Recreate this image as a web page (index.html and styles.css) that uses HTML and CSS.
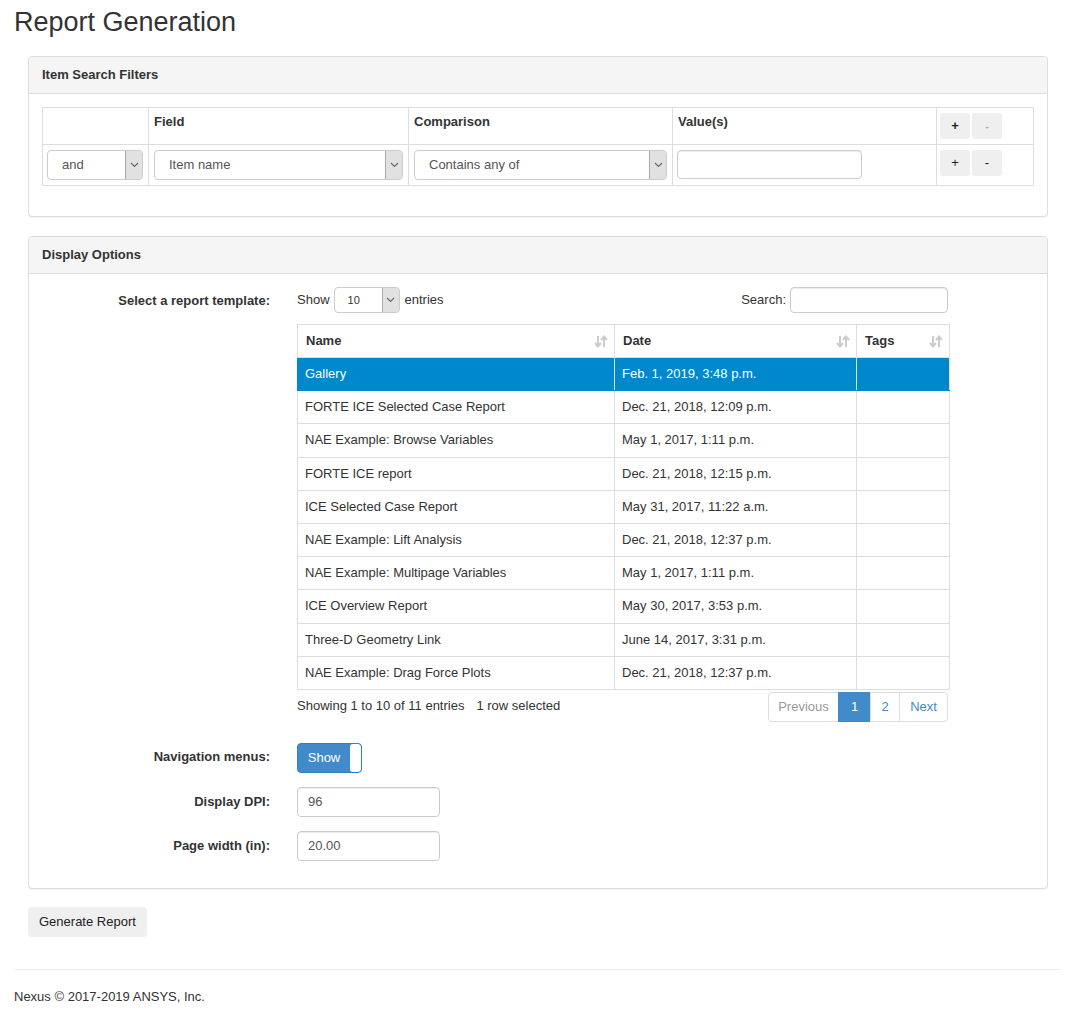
FILE: index.html
```html
<!DOCTYPE html>
<html>
<head>
<meta charset="utf-8">
<link rel="stylesheet" href="styles.css">
</head>
<body>
<div class="page">
  <h1 class="title">Report Generation</h1>

  <div class="panel">
    <div class="panel-heading">Item Search Filters</div>
    <div class="panel-body filters-body">
      <table class="filters">
        <colgroup>
          <col class="c1"><col class="c2"><col class="c3"><col class="c4"><col class="c5">
        </colgroup>
        <tr class="fhead">
          <th></th>
          <th>Field</th>
          <th>Comparison</th>
          <th>Value(s)</th>
          <th class="btncell"><div class="pm"><span class="btn-s">+</span><span class="btn-s dis">-</span></div></th>
        </tr>
        <tr class="frow">
          <td><div class="sel"><span class="sel-txt">and</span><span class="sel-arrow"><svg width="9" height="6" viewBox="0 0 9 6"><path d="M1 1 L4.5 4.5 L8 1" fill="none" stroke="#666" stroke-width="1.1"/></svg></span></div></td>
          <td><div class="sel"><span class="sel-txt">Item name</span><span class="sel-arrow"><svg width="9" height="6" viewBox="0 0 9 6"><path d="M1 1 L4.5 4.5 L8 1" fill="none" stroke="#666" stroke-width="1.1"/></svg></span></div></td>
          <td><div class="sel"><span class="sel-txt">Contains any of</span><span class="sel-arrow"><svg width="9" height="6" viewBox="0 0 9 6"><path d="M1 1 L4.5 4.5 L8 1" fill="none" stroke="#666" stroke-width="1.1"/></svg></span></div></td>
          <td><div class="input val"></div></td>
          <td class="btncell"><div class="pm"><span class="btn-s">+</span><span class="btn-s">-</span></div></td>
        </tr>
      </table>
    </div>
  </div>

  <div class="panel">
    <div class="panel-heading">Display Options</div>
    <div class="panel-body options-body">
      <div class="form-row row-template">
        <div class="label">Select a report template:</div>
        <div class="control">
          <div class="dt-top">
            <div class="dt-len">Show <div class="sel small"><span class="sel-txt">10</span><span class="sel-arrow"><svg width="9" height="6" viewBox="0 0 9 6"><path d="M1 1 L4.5 4.5 L8 1" fill="none" stroke="#666" stroke-width="1.1"/></svg></span></div> entries</div>
            <div class="dt-search">Search: <div class="input search"></div></div>
          </div>
          <table class="dt">
            <colgroup><col class="d1"><col class="d2"><col class="d3"></colgroup>
            <thead>
              <tr>
                <th><span>Name</span><svg class="sort" width="14" height="13" viewBox="0 0 14 13"><path d="M4 1 V11 M1 8 L4 11.5 L7 8" fill="none" stroke="#ccc" stroke-width="2"/><path d="M10 12 V2 M7 5 L10 1.5 L13 5" fill="none" stroke="#ccc" stroke-width="2"/></svg></th>
                <th><span>Date</span><svg class="sort" width="14" height="13" viewBox="0 0 14 13"><path d="M4 1 V11 M1 8 L4 11.5 L7 8" fill="none" stroke="#ccc" stroke-width="2"/><path d="M10 12 V2 M7 5 L10 1.5 L13 5" fill="none" stroke="#ccc" stroke-width="2"/></svg></th>
                <th><span>Tags</span><svg class="sort" width="14" height="13" viewBox="0 0 14 13"><path d="M4 1 V11 M1 8 L4 11.5 L7 8" fill="none" stroke="#ccc" stroke-width="2"/><path d="M10 12 V2 M7 5 L10 1.5 L13 5" fill="none" stroke="#ccc" stroke-width="2"/></svg></th>
              </tr>
            </thead>
            <tbody>
              <tr class="selected"><td>Gallery</td><td>Feb. 1, 2019, 3:48 p.m.</td><td></td></tr>
              <tr><td>FORTE ICE Selected Case Report</td><td>Dec. 21, 2018, 12:09 p.m.</td><td></td></tr>
              <tr><td>NAE Example: Browse Variables</td><td>May 1, 2017, 1:11 p.m.</td><td></td></tr>
              <tr><td>FORTE ICE report</td><td>Dec. 21, 2018, 12:15 p.m.</td><td></td></tr>
              <tr><td>ICE Selected Case Report</td><td>May 31, 2017, 11:22 a.m.</td><td></td></tr>
              <tr><td>NAE Example: Lift Analysis</td><td>Dec. 21, 2018, 12:37 p.m.</td><td></td></tr>
              <tr><td>NAE Example: Multipage Variables</td><td>May 1, 2017, 1:11 p.m.</td><td></td></tr>
              <tr><td>ICE Overview Report</td><td>May 30, 2017, 3:53 p.m.</td><td></td></tr>
              <tr><td>Three-D Geometry Link</td><td>June 14, 2017, 3:31 p.m.</td><td></td></tr>
              <tr><td>NAE Example: Drag Force Plots</td><td>Dec. 21, 2018, 12:37 p.m.</td><td></td></tr>
            </tbody>
          </table>
          <div class="dt-bottom">
            <div class="dt-info">Showing 1 to 10 of 11 entries<span class="sel-info">1 row selected</span></div>
            <div class="pagination">
              <span class="pg prev dis">Previous</span><span class="pg one active">1</span><span class="pg two">2</span><span class="pg next">Next</span>
            </div>
          </div>
        </div>
      </div>

      <div class="form-row row-nav">
        <div class="label">Navigation menus:</div>
        <div class="control">
          <div class="toggle"><span class="toggle-on">Show</span><span class="toggle-knob"></span></div>
        </div>
      </div>

      <div class="form-row row-dpi">
        <div class="label">Display DPI:</div>
        <div class="control"><div class="input num">96</div></div>
      </div>

      <div class="form-row row-width">
        <div class="label">Page width (in):</div>
        <div class="control"><div class="input num">20.00</div></div>
      </div>
    </div>
  </div>

  <div class="gen-wrap"><span class="btn-gen">Generate Report</span></div>

  <hr class="sep">
  <div class="footer">Nexus © 2017-2019 ANSYS, Inc.</div>
</div>
</body>
</html>
```

FILE: styles.css
```css
* { box-sizing: border-box; }
html, body { margin: 0; padding: 0; background: #fff; }
body {
  font-family: "Liberation Sans", Arial, Helvetica, sans-serif;
  font-size: 13px;
  line-height: 20px;
  color: #333;
}
.page { padding: 0 30px 0 14px; }
.title {
  font-size: 27px;
  font-weight: normal;
  line-height: 32px;
  margin: 0;
  padding: 6px 0 0 0;
  height: 56px;
  color: #333;
}
.panel {
  margin-left: 14px;
  margin-right: 14px;
  border: 1px solid #ddd;
  border-radius: 4px;
  background: #fff;
  box-shadow: 0 1px 1px rgba(0,0,0,0.05);
  margin-bottom: 19px;
}
.panel + .gen-wrap { margin-top: -1px; }
.panel-heading {
  background: #f5f5f5;
  border-bottom: 1px solid #ddd;
  border-radius: 3px 3px 0 0;
  height: 37px;
  padding: 8px 13px;
  font-weight: bold;
  color: #333;
}
.filters-body { padding: 13px 13px 30px 13px; }
.filters {
  width: 991px;
  border-collapse: collapse;
  table-layout: fixed;
}
.c1 { width: 106px; } .c2 { width: 260px; } .c3 { width: 264px; } .c4 { width: 264px; } .c5 { width: 97px; }
.filters th, .filters td { border: 1px solid #ddd; }
.filters th {
  text-align: left;
  vertical-align: top;
  padding: 4px 5px;
  height: 37px;
  font-weight: bold;
}
.filters td { padding: 5px 5px 4px 5px; height: 41px; vertical-align: top; }
.filters td:first-child { padding-left: 4px; }
.filters th.btncell { padding: 5px 3px; }
.filters td.btncell { padding: 5px 3px; }
.pm { display: flex; gap: 2px; }
.btn-s {
  width: 30px; height: 26px;
  background: #efefef;
  border-radius: 3px;
  display: flex; align-items: center; justify-content: center;
  font-size: 13px; color: #222;
}
.btn-s.dis { color: #aaa; font-size: 11px; }
.sel {
  display: flex;
  height: 30px;
  border: 1px solid #ccc;
  border-radius: 4px;
  background: #fff;
  overflow: hidden;
}
.sel-txt { flex: 1; padding: 4px 14px; line-height: 20px; color: #555; }
.sel-arrow {
  width: 18px;
  background: #e1e1e1;
  border: 1px solid #a9a9a9;
  border-radius: 0 3px 3px 0;
  display: flex; align-items: center; justify-content: center;
  margin: -1px -1px -1px 0;
}
.input {
  height: 30px;
  border: 1px solid #ccc;
  border-radius: 4px;
  background: #fff;
  box-shadow: inset 0 1px 1px rgba(0,0,0,0.075);
  padding: 4px 10px;
  color: #555;
}
.input.val { width: 185px; height: 29px; margin-left: -1px; }
.options-body { padding: 13px 13px 27px 13px; }
.form-row { display: flex; }
.label {
  width: 255px;
  padding-right: 27px;
  text-align: right;
  font-weight: bold;
}
.control { width: 651px; }
.row-template .label { padding-top: 4px; }
.dt-top { display: flex; justify-content: space-between; align-items: center; height: 26px; }
.dt-len { display: flex; align-items: center; gap: 0; margin-top: -1px; }
.sel.small { width: 66px; height: 26px; margin: 0 5px 0 4px; }
.sel.small .sel-txt { padding: 2px 13px; font-size: 11px; color: #333; }
.dt-search { display: flex; align-items: center; }
.input.search { width: 158px; height: 26px; margin-left: 4px; }
.dt {
  width: 652px;
  margin-top: 11px;
  border-collapse: collapse;
  table-layout: fixed;
}
.d1 { width: 317px; } .d2 { width: 242px; } .d3 { width: 93px; }
.dt th, .dt td { border: 1px solid #ddd; }
.dt th {
  height: 33px;
  padding: 0 8px;
  text-align: left;
  font-weight: bold;
  position: relative;
  border-bottom: 1px solid #ddd;
}
.dt th .sort { position: absolute; right: 6px; top: 10px; }
.dt td { height: 33.2px; padding: 0 7px; white-space: nowrap; }
.dt tr.selected td { background: #0088cc; color: #fff; border-color: #0088cc; border-right-color: #ddd; }
.dt-bottom { display: flex; justify-content: space-between; margin-top: 2px; height: 30px; }
.dt-info { padding-top: 4px; }
.sel-info { margin-left: 12px; }
.pagination { display: flex; height: 30px; }
.pg {
  display: flex; align-items: center; justify-content: center;
  border: 1px solid #ddd;
  margin-left: -1px;
  color: #428bca;
  background: #fff;
  height: 30px;
}
.pg.prev { width: 71px; border-radius: 4px 0 0 4px; margin-left: 0; }
.pg.one { width: 33px; }
.pg.two { width: 30px; }
.pg.next { width: 49px; border-radius: 0 4px 4px 0; }
.pg.dis { color: #999; }
.pg.active { background: #428bca; border-color: #428bca; color: #fff; }
.row-nav { margin-top: 21px; }
.row-nav .label { padding-top: 4px; }
.toggle {
  display: flex;
  width: 65px; height: 30px;
  border: 1px solid #357ebd;
  border-radius: 4px;
  background: #428bca;
  overflow: hidden;
}
.toggle-on { width: 52px; color: #fff; display: flex; align-items: center; justify-content: center; }
.toggle-knob { flex: 1; background: #fff; border-radius: 3px; }
.row-dpi { margin-top: 14px; }
.row-width { margin-top: 14px; }
.row-dpi .label, .row-width .label { padding-top: 5px; }
.input.num { width: 143px; height: 30px; padding: 4px 10px; }
.gen-wrap { margin-left: 14px; }
.btn-gen {
  display: inline-block;
  background: #efefef;
  border-radius: 4px;
  height: 30px;
  padding: 5px 11px;
  color: #222;
}
.sep { border: 0; border-top: 1px solid #eee; margin: 32px 0 0 0; width: 1048px; }
.footer { margin-top: 17px; }
```
